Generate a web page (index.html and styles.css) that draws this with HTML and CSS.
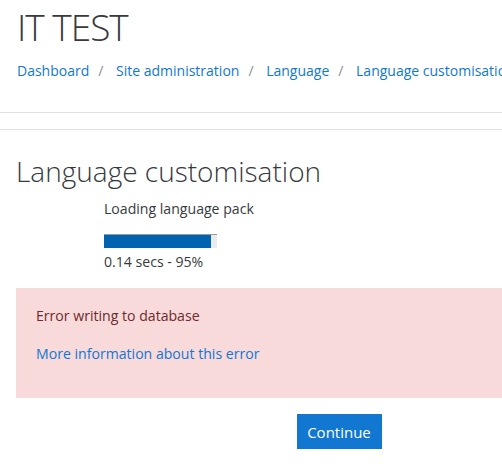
FILE: index.html
```html
<!DOCTYPE html>
<html lang="en">
<head>
<meta charset="utf-8">
<title>Language customisation</title>
<link rel="stylesheet" href="styles.css">
</head>
<body>
<header class="page-header">
  <h1 class="site-title">IT TEST</h1>
  <nav class="breadcrumb">
    <a href="#">Dashboard</a><span class="sep">/</span>
    <a href="#">Site administration</a><span class="sep">/</span>
    <a href="#">Language</a><span class="sep">/</span>
    <a href="#">Language customisation</a>
  </nav>
</header>
<div class="rule rule-a"></div>
<div class="rule rule-b"></div>
<main class="content">
  <h2 class="page-title">Language customisation</h2>
  <div class="progress-block">
    <div class="progress-label">Loading language pack</div>
    <div class="progress"><div class="progress-fill" style="width:95%"></div></div>
    <div class="progress-time">0.14 secs - 95%</div>
  </div>
  <div class="alert">
    <p class="alert-msg">Error writing to database</p>
    <a class="alert-link" href="#">More information about this error</a>
  </div>
  <div class="actions">
    <button class="btn">Continue</button>
  </div>
</main>
</body>
</html>
```
FILE: styles.css
```css
html, body {
  margin: 0;
  padding: 0;
  background: #fff;
  overflow: hidden;
}
body {
  width: 502px;
  font-family: "Open Sans", "Noto Sans", sans-serif;
  font-size: 14.1px;
  color: #373a3c;
}
.page-header {
  padding: 0 0 0 17px;
  white-space: nowrap;
  overflow: hidden;
}
.site-title {
  margin: 0;
  padding-top: 4px;
  font-size: 37px;
  font-weight: 300;
  letter-spacing: -1px;
  line-height: 46px;
  color: #373a3c;
}
.breadcrumb {
  margin-top: 11px;
  font-size: 14px;
  line-height: 20px;
}
.breadcrumb a {
  color: #1177d1;
  text-decoration: none;
}
.sep {
  color: #868e96;
  padding: 0 9px;
}
.rule {
  height: 1px;
  background: #dee2e6;
}
.rule-a { margin-top: 31px; }
.rule-b { margin-top: 16px; }
.content {
  padding: 0 0 0 16px;
}
.page-title {
  margin: 0;
  padding-top: 23px;
  font-size: 28px;
  font-weight: 300;
  line-height: 36px;
  color: #373a3c;
}
.progress-block {
  margin-left: 88px;
  margin-top: 10px;
}
.progress-label {
  line-height: 20px;
}
.progress {
  margin-top: 15px;
  width: 113px;
  height: 13px;
  background: #e9ecef;
  border-top: 1px solid #999;
}
.progress-fill {
  height: 100%;
  background: #0063b2;
}
.progress-time {
  line-height: 20px;
  margin-top: 4px;
}
.alert {
  margin-top: 16px;
  background: #f8dada;
  color: #6e2a2d;
  padding: 18px 20px 34px 20px;
}
.alert-msg {
  margin: 0 0 18px 0;
  line-height: 20px;
}
.alert-link {
  color: #1177d1;
  text-decoration: none;
  line-height: 20px;
}
.actions {
  display: flex;
  justify-content: center;
  padding-top: 16px;
}
.btn {
  font-family: inherit;
  font-size: 15px;
  color: #fff;
  background: #1177d1;
  border: none;
  width: 85px;
  height: 35px;
  margin-left: 160px;
  padding: 0;
}
```
